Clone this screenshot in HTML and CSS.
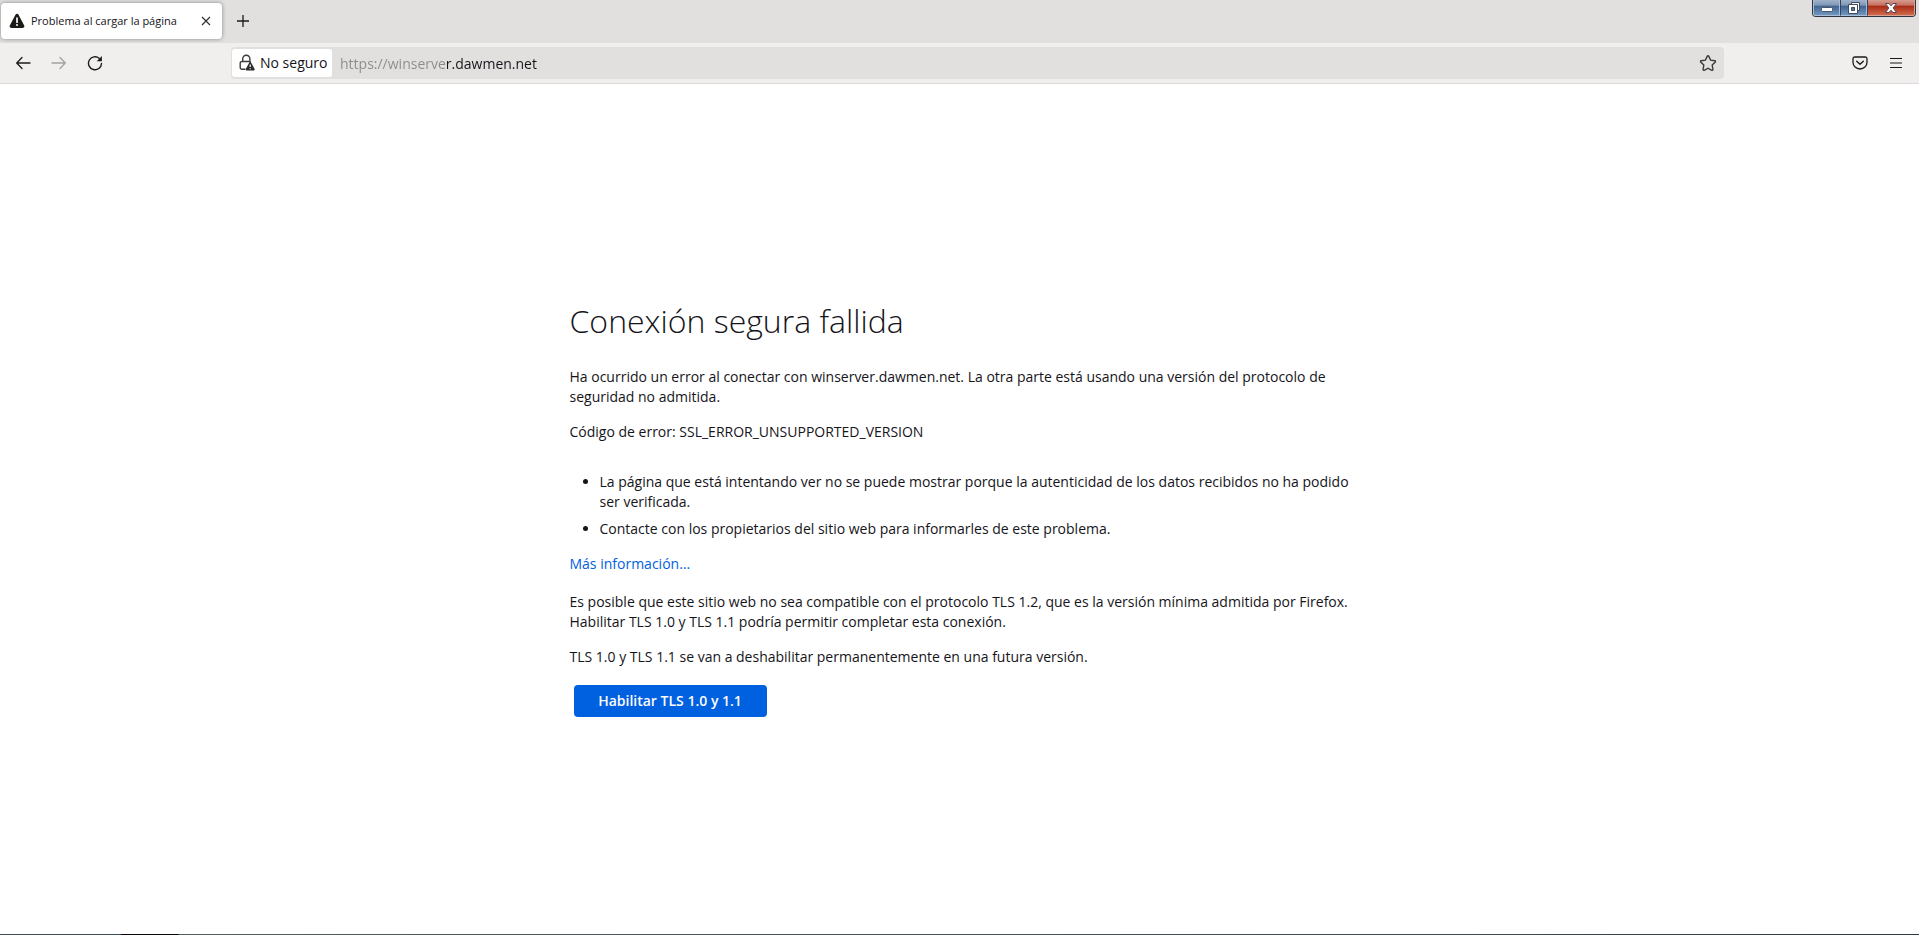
FILE: index.html
```html
<!DOCTYPE html>
<html lang="es">
<head>
<meta charset="utf-8">
<title>Problema al cargar la página</title>
<link rel="stylesheet" href="styles.css">
</head>
<body>
<header class="tabbar">
  <div class="tab">
    <svg class="tab-icon" width="16" height="16" viewBox="0 0 16 16" aria-hidden="true"><path d="M6.6 1.6a1.6 1.6 0 0 1 2.8 0l5.8 10.9a1.6 1.6 0 0 1-1.4 2.4H2.2a1.6 1.6 0 0 1-1.4-2.4z" fill="#1c1b18"/><path d="M8 5v4.2" stroke="#fff" stroke-width="1.7" stroke-linecap="round"/><circle cx="8" cy="12" r="1" fill="#fff"/></svg>
    <span class="tab-label">Problema al cargar la página</span>
    <button class="tab-close" aria-label="Cerrar pestaña"><svg width="10" height="10" viewBox="0 0 10 10"><path d="M1 1l8 8M9 1L1 9" stroke="#2a2a2a" stroke-width="1.1"/></svg></button>
  </div>
  <button class="icon-btn new-tab" aria-label="Nueva pestaña"><svg width="14" height="14" viewBox="0 0 14 14"><path d="M7 1v12M1 7h12" stroke="#1c1b18" stroke-width="1.3"/></svg></button>
  <div class="window-controls">
    <button class="win win-min" aria-label="Minimizar"><svg width="14" height="12" viewBox="0 0 14 12"><rect x="1.5" y="5.5" width="11" height="4" rx="1" fill="#fff" stroke="#4b5568"/></svg></button>
    <button class="win win-restore" aria-label="Restaurar"><svg width="14" height="14" viewBox="0 0 14 14"><path d="M4.500 1.500h8v8h-8z" fill="#f5f5f5" stroke="#414b5f"/><path d="M1.500 3.500h9v9h-9z" fill="#fff" stroke="#414b5f"/><path d="M4.500 6.500h3v3h-3z" fill="#4e77a6" stroke="#414b5f"/></svg></button>
    <button class="win win-close" aria-label="Cerrar"><svg width="14" height="12" viewBox="0 0 14 12"><path d="M1.500 1.500h3.600L7 3.800l1.900-2.300h3.600L9.200 6l3.300 4.500H8.900L7 8.200l-1.900 2.300H1.500L4.800 6z" fill="#fff" stroke="#5a4450"/></svg></button>
  </div>
</header>
<nav class="toolbar" aria-label="Navegación">
  <div class="nav-buttons">
    <button class="icon-btn" aria-label="Atrás"><svg width="16" height="16" viewBox="0 0 16 16"><path d="M7 2.500L1.700 8 7 13.500M2 8h13" fill="none" stroke="#1c1b18" stroke-width="1.300" stroke-linecap="round" stroke-linejoin="round"/></svg></button>
    <button class="icon-btn" aria-label="Adelante" disabled><svg width="16" height="16" viewBox="0 0 16 16"><path d="M9 2.500L14.300 8 9 13.500M14 8H1" fill="none" stroke="#a3a2a0" stroke-width="1.300" stroke-linecap="round" stroke-linejoin="round"/></svg></button>
    <button class="icon-btn" aria-label="Recargar"><svg width="16" height="16" viewBox="0 0 16 16"><path d="M12.200 3.300A6.500 6.500 0 1 0 14.500 8.500" fill="none" stroke="#1c1b18" stroke-width="1.400" stroke-linecap="round"/><path d="M14.900 1v4.700a.5.500 0 0 1-.5.500H9.700z" fill="#1c1b18"/></svg></button>
  </div>
  <div class="urlbar">
    <button class="identity"><svg width="16" height="18" viewBox="0 0 16 18" aria-hidden="true"><path d="M3.700 7.500V4.800a3.600 3.600 0 0 1 7.200 0v2.700M6 15.300H3a1.800 1.800 0 0 1-1.800-1.800V9.300A1.800 1.800 0 0 1 3 7.500h8.200" fill="none" stroke="#3b3b3a" stroke-width="1.400" stroke-linecap="round"/><path d="M10.300 8.400a1 1 0 0 1 1.800 0l3.500 6.500a1 1 0 0 1-.9 1.500h-7a1 1 0 0 1-.9-1.500z" fill="#2b2b2a"/><path d="M11.200 10.500v2.600M11.200 14.200v1" stroke="#fff" stroke-width="1.200"/></svg><span>No seguro</span></button>
    <input class="url" type="text" aria-label="Dirección" value="https://winserver.dawmen.net">
    <button class="icon-btn star" aria-label="Añadir a marcadores"><svg width="18" height="18" viewBox="0 0 18 18"><path d="M8.300 2.100a.8.800 0 0 1 1.400 0l1.900 4 4.300.6a.8.800 0 0 1 .4 1.300l-3.100 3.100.7 4.400a.8.800 0 0 1-1.100.8L9 14.200l-3.800 2.100a.8.800 0 0 1-1.100-.8l.7-4.400L1.700 8a.8.800 0 0 1 .4-1.300l4.300-.6z" fill="none" stroke="#3a3a39" stroke-width="1.400"/></svg></button>
  </div>
  <div class="tools">
    <button class="icon-btn" aria-label="Guardar en Pocket"><svg width="16" height="16" viewBox="0 0 16 16"><path d="M2.600 2h10.800A1.700 1.700 0 0 1 15 3.700v3.600a7 6.700 0 0 1-14 0V3.700A1.700 1.700 0 0 1 2.600 2z" fill="none" stroke="#1c1b18" stroke-width="1.300"/><path d="M4.700 6.300L8 9.300l3.300-3" fill="none" stroke="#1c1b18" stroke-width="1.400" stroke-linecap="round" stroke-linejoin="round"/></svg></button>
    <button class="icon-btn" aria-label="Abrir menú"><svg width="14" height="14" viewBox="0 0 14 14"><path d="M1 2.500h12M1 7h12M1 11.500h12" stroke="#1c1b18" stroke-width="1.200"/></svg></button>
  </div>
</nav>
<main class="page">
  <div class="content">
    <h1>Conexión segura fallida</h1>
    <p>Ha ocurrido un error al conectar con winserver.dawmen.net. La otra parte está usando una versión del protocolo de seguridad no admitida.</p>
    <p>Código de error: SSL_ERROR_UNSUPPORTED_VERSION</p>
    <ul>
      <li>La página que está intentando ver no se puede mostrar porque la autenticidad de los datos recibidos no ha podido ser verificada.</li>
      <li>Contacte con los propietarios del sitio web para informarles de este problema.</li>
    </ul>
    <a href="#mas">Más información…</a>
    <div class="tls">
      <p>Es posible que este sitio web no sea compatible con el protocolo TLS 1.2, que es la versión mínima admitida por Firefox. Habilitar TLS 1.0 y TLS 1.1 podría permitir completar esta conexión.</p>
      <p>TLS 1.0 y TLS 1.1 se van a deshabilitar permanentemente en una futura versión.</p>
      <button class="primary">Habilitar TLS 1.0 y 1.1</button>
    </div>
  </div>
</main>
<footer class="taskbar"></footer>
</body>
</html>
```

FILE: styles.css
```css
* { box-sizing: border-box; }

body {
  margin: 0;
  min-height: 100vh;
  display: flex;
  flex-direction: column;
  background: #fff;
  color: #15141a;
  font: 14px/20px "Open Sans", "Noto Sans", sans-serif;
}

button, input { font: inherit; color: inherit; border: 0; padding: 0; margin: 0; background: none; }

svg { display: block; flex: none; }

.icon-btn {
  width: 36px;
  height: 32px;
  display: flex;
  align-items: center;
  justify-content: center;
}

/* Tab strip */
.tabbar {
  display: flex;
  align-items: flex-start;
  height: 43px;
  padding: 3px 3px 0 1px;
  background: #e1e0de;
}

.tab {
  display: flex;
  align-items: center;
  width: 221px;
  height: 36px;
  padding: 0 6px 0 8px;
  border-radius: 4px;
  background: #fff;
  box-shadow: 0 0 4px rgba(0, 0, 0, 0.4);
}

.tab-label { flex: 1; margin-left: 6px; font-size: 11px; white-space: nowrap; }

.tab-close {
  width: 20px;
  height: 20px;
  display: flex;
  align-items: center;
  justify-content: center;
}

.new-tab { margin: 2px 0 0 3px; }

.window-controls {
  display: flex;
  height: 17px;
  margin: -3px 0 0 auto;
  border: 1px solid #2e3644;
  border-top: 0;
  border-radius: 0 0 4px 4px;
  overflow: hidden;
}

.win {
  display: flex;
  align-items: center;
  justify-content: center;
  width: 27px;
  height: 16px;
  border: 1px solid #a9bdd4;
  border-top: 0;
  background: linear-gradient(#9fb2c9 0, #7f98b6 35%, #40638f 40%, #6f96c0 100%);
}

.win + .win { border-left-color: #35435a; }

.win-close {
  width: 48px;
  border-color: #d9a294;
  background: linear-gradient(#d59c90 0, #c4705f 35%, #a92a16 40%, #cf6a4c 100%);
}

/* Navigation bar */
.toolbar {
  display: flex;
  align-items: center;
  height: 41px;
  padding: 0 5px;
  background: #f0efed;
  border-bottom: 1px solid #dbdad8;
}

.nav-buttons { display: flex; width: 226px; }

.urlbar {
  flex: 1;
  display: flex;
  align-items: center;
  height: 32px;
  padding-left: 1px;
  border-radius: 4px;
  background: #e1e0de;
}

.identity {
  display: flex;
  align-items: center;
  gap: 5px;
  height: 28px;
  width: 100px;
  padding-left: 7px;
  border-radius: 3px;
  background: #fff;
  white-space: nowrap;
}

/* The scheme and subdomain are dimmed, the main domain is dark */
.url {
  flex: 1;
  min-width: 0;
  height: 28px;
  margin-left: 8px;
  color: transparent;
  background: linear-gradient(90deg, #8c8b8a 107px, #15141a 107px);
  background-clip: text;
  -webkit-background-clip: text;
}

.star { width: 32px; }

.tools { display: flex; width: 190px; justify-content: flex-end; }

/* Error page */
.page {
  flex: 1;
  display: flex;
  align-items: center;
  justify-content: center;
  padding: 0 16px;
}

.content { width: 100%; max-width: 780px; }

h1 { margin: 0 0 26px; font-size: 32px; line-height: 40px; font-weight: 300; }

p { margin: 0 0 15px; }

ul { margin: 30px 0 15px; padding-left: 30px; }

li + li { margin-top: 7px; }

a { display: block; width: fit-content; color: #0061e0; text-decoration: none; }

.tls { margin-top: 18px; }

.primary {
  display: block;
  min-width: 193px;
  height: 32px;
  margin: 18px 4px 0;
  padding: 0 16px;
  border-radius: 4px;
  background: #0061e0;
  color: #fbfbfe;
  font-weight: 600;
}

.taskbar { height: 1px; background: linear-gradient(90deg, #3c4c59 0 121px, #0b0507 121px 178px, #53605e 179px, #3b4755 80%, #303746); }
```
